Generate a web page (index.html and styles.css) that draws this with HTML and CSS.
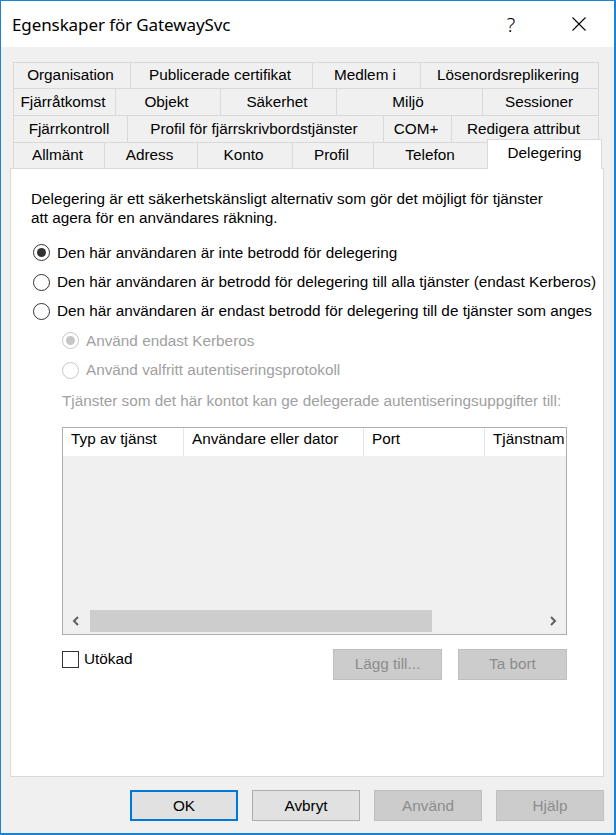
FILE: index.html
```html
<!DOCTYPE html>
<html lang="sv">
<head>
<meta charset="utf-8">
<title>Egenskaper för GatewaySvc</title>
<link rel="stylesheet" href="styles.css">
</head>
<body>
<div class="window">
  <div class="titlebar">
    <div class="title">Egenskaper för GatewaySvc</div>
    <div class="tb-help">?</div>
    <div class="tb-close">
      <svg width="16" height="16" viewBox="0 0 16 16"><path d="M1.5 1.5 L14.5 14.5 M14.5 1.5 L1.5 14.5" stroke="#000" stroke-width="1.1" fill="none"/></svg>
    </div>
  </div>

  <div class="tabs">
    <div class="tabrow r1">
      <div class="tab w117">Organisation</div>
      <div class="tab w182">Publicerade certifikat</div>
      <div class="tab w108">Medlem i</div>
      <div class="tab w179">Lösenordsreplikering</div>
    </div>
    <div class="tabrow r2">
      <div class="tab w102">Fjärråtkomst</div>
      <div class="tab w105">Objekt</div>
      <div class="tab w116">Säkerhet</div>
      <div class="tab w146">Miljö</div>
      <div class="tab w117">Sessioner</div>
    </div>
    <div class="tabrow r3">
      <div class="tab w114">Fjärrkontroll</div>
      <div class="tab w256">Profil för fjärrskrivbordstjänster</div>
      <div class="tab w68">COM+</div>
      <div class="tab w148">Redigera attribut</div>
    </div>
    <div class="tabrow r4">
      <div class="tab w91">Allmänt</div>
      <div class="tab w93">Adress</div>
      <div class="tab w95">Konto</div>
      <div class="tab w81">Profil</div>
      <div class="tab w116">Telefon</div>
      <div class="tab selected">Delegering</div>
    </div>
  </div>

  <div class="panel">
    <p class="intro">Delegering är ett säkerhetskänsligt alternativ som gör det möjligt för tjänster<br>att agera för en användares räkning.</p>

    <div class="opts">
      <div class="opt"><span class="radio checked"></span><span>Den här användaren är inte betrodd för delegering</span></div>
      <div class="opt"><span class="radio"></span><span>Den här användaren är betrodd för delegering till alla tjänster (endast Kerberos)</span></div>
      <div class="opt"><span class="radio"></span><span>Den här användaren är endast betrodd för delegering till de tjänster som anges</span></div>
      <div class="opt sub disabled"><span class="radio checked"></span><span>Använd endast Kerberos</span></div>
      <div class="opt sub disabled"><span class="radio"></span><span>Använd valfritt autentiseringsprotokoll</span></div>
    </div>

    <div class="caption">Tjänster som det här kontot kan ge delegerade autentiseringsuppgifter till:</div>

    <div class="listview">
      <div class="lv-head">
        <div class="col c1">Typ av tjänst</div>
        <div class="col c2">Användare eller dator</div>
        <div class="col c3">Port</div>
        <div class="col c4">Tjänstnam</div>
      </div>
      <div class="lv-body"></div>
      <div class="hscroll">
        <div class="arrow"><svg width="8" height="10" viewBox="0 0 8 10"><path d="M6 1 L2 5 L6 9" stroke="#606060" stroke-width="2" fill="none"/></svg></div>
        <div class="track"><div class="thumb"></div></div>
        <div class="arrow"><svg width="8" height="10" viewBox="0 0 8 10"><path d="M2 1 L6 5 L2 9" stroke="#606060" stroke-width="2" fill="none"/></svg></div>
      </div>
    </div>

    <div class="lv-actions">
      <div class="check"><span class="box"></span><span>Utökad</span></div>
      <button class="btn disabled w109">Lägg till...</button>
      <button class="btn disabled w109">Ta bort</button>
    </div>
  </div>

  <div class="footer">
    <button class="btn default">OK</button>
    <button class="btn">Avbryt</button>
    <button class="btn disabled">Använd</button>
    <button class="btn disabled">Hjälp</button>
  </div>
</div>
</body>
</html>
```

FILE: styles.css
```css
html, body {
  margin: 0;
  padding: 0;
  background: #f0f0f0;
}

body {
  font-family: "Liberation Sans", Arial, sans-serif;
  font-size: 15.3px;
  color: #000;
}

.window {
  width: 616px;
  height: 835px;
  box-sizing: border-box;
  border-style: solid;
  border-color: #1883d7;
  border-width: 1px 2px 2px 1px;
  background: #f0f0f0;
  display: flex;
  flex-direction: column;
}

/* title bar */
.titlebar {
  height: 46px;
  background: #fff;
  display: flex;
  align-items: center;
  flex-shrink: 0;
}

.title {
  flex: 1;
  padding-left: 11px;
  font-family: "Noto Sans", "Open Sans", sans-serif;
  font-size: 17px;
  letter-spacing: -0.1px;
}

.tb-help {
  width: 20px;
  text-align: center;
  font-family: "Noto Sans", sans-serif;
  font-weight: 300;
  font-size: 20px;
  margin-right: 50px;
}

.tb-close {
  width: 16px;
  height: 16px;
  margin-right: 27px;
  display: flex;
}

/* tabs */
.tabs {
  margin: 15px 0 0 12px;
  flex-shrink: 0;
}

.tabrow {
  display: flex;
}

.tabrow.r1, .tabrow.r4 { height: 26px; }
.tabrow.r2, .tabrow.r3 { height: 27px; }

.tab {
  box-sizing: border-box;
  border-top: 1px solid #d9d9d9;
  border-left: 1px solid #d9d9d9;
  background: #f0f0f0;
  text-align: center;
  white-space: nowrap;
  display: flex;
  align-items: center;
  justify-content: center;
  padding-bottom: 1px;
  padding-right: 3px;
}

.tab:last-child { border-right: 1px solid #d9d9d9; }

.w68 { width: 68px; }
.w81 { width: 81px; }
.w91 { width: 91px; }
.w93 { width: 93px; }
.w95 { width: 95px; }
.w102 { width: 102px; }
.w105 { width: 105px; }
.w108 { width: 108px; }
.w114 { width: 114px; }
.w116 { width: 116px; }
.w117 { width: 117px; }
.w148 { width: 148px; }
.w146 { width: 146px; }
.w179 { width: 179px; }
.w182 { width: 182px; }
.w256 { width: 256px; }

.tab.selected {
  width: 115px;
  height: 30px;
  margin: -3px -3px 0 -2px;
  background: #fff;
  position: relative;
  z-index: 1;
  padding-bottom: 4px;
  padding-right: 0;
}

/* panel */
.panel {
  margin-left: 9px;
  width: 594px;
  height: 609px;
  box-sizing: border-box;
  border: 1px solid #d9d9d9;
  background: #fff;
  flex-shrink: 0;
}

.intro {
  margin: 20px 0 0 20px;
  line-height: 19px;
}

.opts {
  margin-top: 11px;
}

.opt {
  height: 29.4px;
  display: flex;
  align-items: center;
  padding-left: 22px;
  white-space: nowrap;
}

.opt.sub {
  padding-left: 51px;
}

.radio {
  width: 17px;
  height: 17px;
  box-sizing: border-box;
  border: 1px solid #333;
  border-radius: 50%;
  background: #fff;
  margin-right: 7px;
  display: flex;
  align-items: center;
  justify-content: center;
  flex-shrink: 0;
}

.radio.checked::after {
  content: "";
  width: 9px;
  height: 9px;
  border-radius: 50%;
  background: #333;
}

.disabled { color: #a0a0a0; }

.opt.disabled .radio { border-color: #c6c6c6; }
.opt.disabled .radio.checked::after { background: #c6c6c6; }

.caption {
  margin: 6px 0 0 51px;
  line-height: 19px;
  color: #a0a0a0;
  white-space: nowrap;
}

/* list view */
.listview {
  margin: 17px 0 0 51px;
  width: 505px;
  height: 208px;
  box-sizing: border-box;
  border: 1px solid #adadad;
  display: flex;
  flex-direction: column;
  overflow: hidden;
}

.lv-head {
  height: 28px;
  background: #fff;
  display: flex;
  flex-shrink: 0;
}

.col {
  box-sizing: border-box;
  padding: 0 0 0 8px;
  line-height: 19px;
  padding-top: 0;
  white-space: nowrap;
  border-right: 1px solid #e5e5e5;
  flex-shrink: 0;
  display: flex;
  align-items: center;
  padding-bottom: 6px;
}

.c1 { width: 121px; }
.c2 { width: 180px; }
.c3 { width: 121px; }
.c4 { width: 82px; border-right: none; }

.lv-body {
  flex: 1;
  background: #f0f0f0;
}

.hscroll {
  height: 24px;
  background: #f0f0f0;
  display: flex;
  align-items: flex-start;
  flex-shrink: 0;
}

.arrow {
  width: 26px;
  height: 22px;
  display: flex;
  align-items: center;
  justify-content: center;
}

.track {
  flex: 1;
  height: 22px;
  display: flex;
}

.thumb {
  width: 342px;
  height: 22px;
  margin-left: 1px;
  background: #cdcdcd;
}

/* actions */
.lv-actions {
  margin: 14px 0 0 51px;
  width: 505px;
  display: flex;
  align-items: flex-start;
}

.check {
  flex: 1;
  display: flex;
  align-items: center;
  margin-top: 2px;
  height: 17px;
}

.box {
  width: 17px;
  height: 17px;
  box-sizing: border-box;
  border: 1px solid #333;
  background: #fff;
  margin-right: 5px;
}

.btn {
  font-family: "Liberation Sans", Arial, sans-serif;
  font-size: 15.3px;
  width: 108px;
  height: 31px;
  box-sizing: border-box;
  background: #e1e1e1;
  border: 1px solid #adadad;
  color: #000;
  padding: 0;
  margin: 0;
}

.btn.w109 { width: 109px; margin-left: 16px; }
.lv-actions .btn:first-of-type { margin-left: 0; }

.btn.default {
  border: 2px solid #0078d7;
}

.btn.disabled {
  background: #cccccc;
  border-color: #bfbfbf;
  color: #8c8c8c;
}

/* footer */
.footer {
  margin-top: 13px;
  display: flex;
  justify-content: flex-end;
  gap: 14px;
  padding-right: 10px;
}
```
